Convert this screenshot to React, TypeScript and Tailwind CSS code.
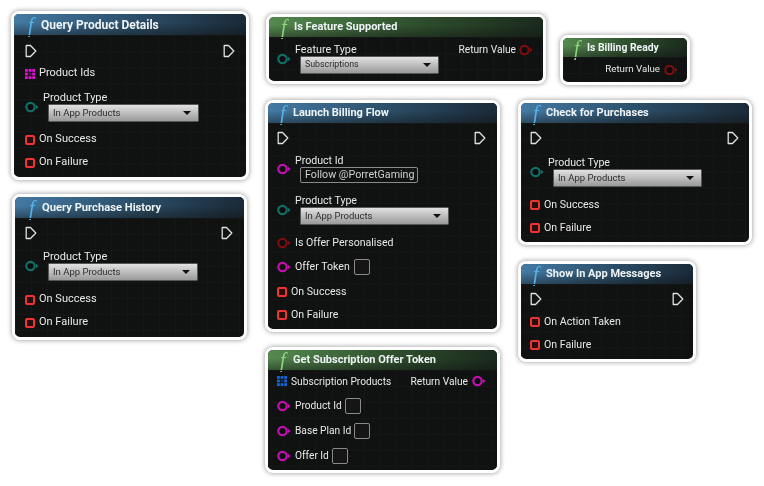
// App.tsx
import type { ReactNode } from "react";

// ================== PINS
const ExecPin = () => (
	<svg width="12" height="14" viewBox="0 0 12 14" className="shrink-0">
		<path
			d="M1.2 1.5 H5.5 L10.8 7 L5.5 12.5 H1.2 Z"
			fill="none"
			stroke="#e0e0e0"
			strokeWidth="1.3"
			strokeLinejoin="round"
		/>
	</svg>
);

const DataPin = ({ color }: { color: string }) => (
	<svg width="14" height="12" viewBox="0 0 14 12" className="shrink-0">
		<circle cx="5.5" cy="6" r="4.2" fill="#0d0d0d" stroke={color} strokeWidth="2.2" />
		<path d="M11 3.8 L13.6 6 L11 8.2 Z" fill={color} />
	</svg>
);

const ArrayPin = ({ color }: { color: string }) => (
	<svg width="10" height="10" viewBox="0 0 10 10" className="shrink-0">
		{[0, 1, 2].map((r) =>
			[0, 1, 2].map((c) =>
				r === 1 && c === 1 ? null : (
					<rect key={`${r}-${c}`} x={c * 3.6} y={r * 3.6} width="2.8" height="2.8" fill={color} />
				),
			),
		)}
		<rect x="3.6" y="3.6" width="2.8" height="2.8" fill={color} opacity="0.35" />
	</svg>
);

const StructPin = () => (
	<span className="h-[10px] w-[10px] shrink-0 rounded-[2px] border-2 border-[#ee3333] bg-[#2a0d0d]" />
);

// ================== ROWS
const ExecRow = () => (
	<div className="flex h-[23px] items-center justify-between">
		<ExecPin />
		<ExecPin />
	</div>
);

const DelegateRow = ({ label, className = "" }: { label: string; className?: string }) => (
	<div className={`flex h-[23px] items-center gap-1 ${className}`}>
		<StructPin />
		<span>{label}</span>
	</div>
);

const Dropdown = ({
	value,
	width,
	valueClass = "text-[9.5px]",
}: {
	value: string;
	width: string;
	valueClass?: string;
}) => (
	<div
		className={`ml-[5px] flex h-[18px] items-center justify-between rounded-[1px] border border-[#55585a] bg-linear-to-b from-[#e2e2e2] to-[#9a9a9a] pl-1 pr-[7px] text-[#2c2c2c] ${valueClass} ${width}`}
	>
		<span>{value}</span>
		<span className="h-0 w-0 border-x-[4px] border-t-[4px] border-x-transparent border-t-[#111]" />
	</div>
);

const EnumBlock = ({
	label,
	value,
	width,
	valueClass,
	className = "",
}: {
	label: string;
	value: string;
	width: string;
	valueClass?: string;
	className?: string;
}) => (
	<div className={`flex items-center gap-[4px] ${className}`}>
		<div className="mt-[1px]">
			<DataPin color="#0f6f67" />
		</div>
		<div className="flex flex-col">
			<span className="h-[13px] leading-[13px]">{label}</span>
			<Dropdown value={value} width={width} valueClass={valueClass} />
		</div>
	</div>
);

const EmptyBox = () => (
	<span className="h-4 w-4 shrink-0 rounded-[2px] border border-[#8a8a8a] bg-[#141514]" />
);

const StringRow = ({
	label,
	labelClass = "",
	className = "",
}: {
	label: string;
	labelClass?: string;
	className?: string;
}) => (
	<div className={`flex h-[25px] items-center gap-[4px] ${className}`}>
		<DataPin color="#c40fb0" />
		<span className={labelClass}>{label}</span>
		<EmptyBox />
	</div>
);

// ================== NODE FRAME
type NodeProps = {
	title: string;
	pure?: boolean;
	box: string;
	headerClass?: string;
	bodyClass?: string;
	children: ReactNode;
};

const GraphNode = ({
	title,
	pure = false,
	box,
	headerClass = "h-5 pl-3 text-[11px]",
	bodyClass = "",
	children,
}: NodeProps) => (
	<div
		className={`absolute flex flex-col overflow-hidden rounded-[8px] border-[3px] border-white bg-[#101211] font-['Roboto',sans-serif] text-[11px] text-[#e8e8e8] shadow-[0_0_4px_1px_rgba(0,0,0,0.3)] ${box}`}
	>
		<div
			className={`flex shrink-0 items-center font-bold text-[#eef3f5] ${headerClass} ${
				pure
					? "bg-[linear-gradient(to_bottom,transparent_40%,rgba(16,18,17,0.45)),linear-gradient(to_right,#558a50,#31522f_50%,#1a2a1c)]"
					: "bg-[linear-gradient(to_bottom,transparent_40%,rgba(16,18,17,0.45)),linear-gradient(to_right,#447aa4,#2d506b_50%,#1a2a38)]"
			}`}
		>
			<span
				className={`w-[13px] font-['Liberation_Serif',serif] text-[20px] leading-none font-normal italic ${
					pure ? "text-[#8fd67f]" : "text-[#56b4ea]"
				}`}
			>
				f
			</span>
			<span className="whitespace-nowrap pt-px">{title}</span>
		</div>
		<div
			className={`flex flex-1 flex-col bg-[linear-gradient(#151716_1px,transparent_1px),linear-gradient(90deg,#151716_1px,transparent_1px)] bg-[size:16px_16px] whitespace-nowrap ${bodyClass}`}
		>
			{children}
		</div>
	</div>
);

// ================== APP
export default function App() {
	return (
		<div className="relative h-[486px] w-[764px] overflow-hidden bg-white blur-[0.35px]">
			<GraphNode
				title="Query Product Details"
				box="left-[11px] top-[11px] h-[169px] w-[238px]"
				headerClass="h-[21px] pl-[14px] text-[12px]"
				bodyClass="px-[11px] pt-[4px]"
			>
				<ExecRow />
				<div className="flex h-[23px] items-center gap-1">
					<ArrayPin color="#e010d0" />
					<span>Product Ids</span>
				</div>
				<EnumBlock label="Product Type" value="In App Products" width="w-[151px]" className="mt-[6px]" />
				<DelegateRow label="On Success" className="mt-[6px]" />
				<DelegateRow label="On Failure" />
			</GraphNode>

			<GraphNode
				title="Query Purchase History"
				box="left-[12px] top-[194px] h-[146px] w-[235px]"
				headerClass="h-[21px] pl-[14px] text-[11.2px]"
				bodyClass="pl-[10px] pr-[11px] pt-[3px]"
			>
				<ExecRow />
				<EnumBlock label="Product Type" value="In App Products" width="w-[150px]" className="mt-[6px]" />
				<DelegateRow label="On Success" className="mt-[7px]" />
				<DelegateRow label="On Failure" />
			</GraphNode>

			<GraphNode
				pure
				title="Is Feature Supported"
				box="left-[266px] top-[14px] h-[70px] w-[280px]"
				bodyClass="pl-[8px] pr-[10px] pt-[6px] text-[10.8px]"
			>
				<div className="flex items-start justify-between">
					<EnumBlock
						label="Feature Type"
						value="Subscriptions"
						width="w-[139px]"
						valueClass="text-[8.8px]"
					/>
					<div className="flex h-[13px] items-center gap-[3px] text-[10.2px]">
						<span>Return Value</span>
						<DataPin color="#7c0d0d" />
					</div>
				</div>
			</GraphNode>

			<GraphNode
				pure
				title="Is Billing Ready"
				box="left-[560px] top-[35px] h-[50px] w-[130px]"
				headerClass="h-[19px] pl-[11px] text-[10.4px]"
				bodyClass="pr-[9px] pt-[3px] items-end text-[9.7px]"
			>
				<div className="flex h-[19px] items-center gap-[4px]">
					<span>Return Value</span>
					<DataPin color="#7c0d0d" />
				</div>
			</GraphNode>

			<GraphNode
				title="Launch Billing Flow"
				box="left-[265px] top-[100px] h-[232px] w-[235px]"
				bodyClass="pl-[9px] pr-[11px] pt-[3px] text-[10.6px]"
			>
				<ExecRow />
				<div className="mt-[5px] flex items-center gap-[4px]">
					<div className="mt-[1px]">
						<DataPin color="#c40fb0" />
					</div>
					<div className="flex flex-col">
						<span className="h-[13px] leading-[13px]">Product Id</span>
						<span className="ml-[5px] flex h-4 w-[118px] items-center rounded-[2px] border border-[#8a8a8a] pl-1 text-[10.7px] text-[#cfcfcf]">
							Follow @PorretGaming
						</span>
					</div>
				</div>
				<EnumBlock label="Product Type" value="In App Products" width="w-[149px]" className="mt-[11px]" />
				<div className="mt-[6px] flex h-[23px] items-center gap-[4px]">
					<DataPin color="#7c0d0d" />
					<span>Is Offer Personalised</span>
				</div>
				<div className="flex h-[25px] items-center gap-[4px]">
					<DataPin color="#c40fb0" />
					<span className="w-[55px]">Offer Token</span>
					<EmptyBox />
				</div>
				<DelegateRow label="On Success" className="mt-[1px]" />
				<DelegateRow label="On Failure" />
			</GraphNode>

			<GraphNode
				pure
				title="Get Subscription Offer Token"
				box="left-[265px] top-[347px] h-[126px] w-[235px]"
				bodyClass="pl-[9px] pr-[11px] text-[10.2px]"
			>
				<div className="flex h-[23px] items-center justify-between">
					<div className="flex items-center gap-1">
						<ArrayPin color="#1565d8" />
						<span>Subscription Products</span>
					</div>
					<div className="flex items-center gap-[4px]">
						<span>Return Value</span>
						<DataPin color="#c40fb0" />
					</div>
				</div>
				<StringRow label="Product Id" labelClass="w-[46px]" />
				<StringRow label="Base Plan Id" labelClass="w-[55px]" />
				<StringRow label="Offer Id" labelClass="w-[33px]" />
			</GraphNode>

			<GraphNode
				title="Check for Purchases"
				box="left-[518px] top-[100px] h-[145px] w-[234px]"
				bodyClass="pl-[9px] pr-[10px] pt-[3px] text-[10.6px]"
			>
				<ExecRow />
				<EnumBlock label="Product Type" value="In App Products" width="w-[149px]" className="mt-[7px]" />
				<DelegateRow label="On Success" className="mt-[6px]" />
				<DelegateRow label="On Failure" />
			</GraphNode>

			<GraphNode
				title="Show In App Messages"
				box="left-[518px] top-[261px] h-[101px] w-[178px]"
				bodyClass="pl-[9px] pr-[9px] pt-[3px] text-[10.6px]"
			>
				<ExecRow />
				<DelegateRow label="On Action Taken" />
				<DelegateRow label="On Failure" />
			</GraphNode>
		</div>
	);
}
